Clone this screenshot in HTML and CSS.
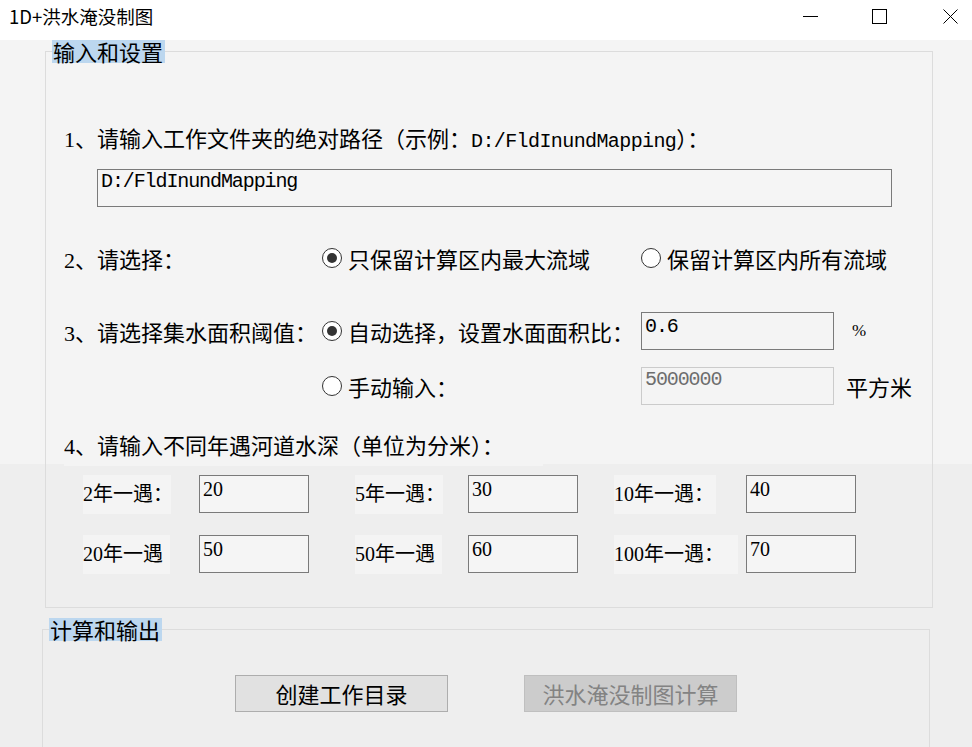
FILE: index.html
```html
<!DOCTYPE html>
<html lang="zh-CN">
<head>
<meta charset="utf-8">
<title>1D+洪水淹没制图</title>
<link rel="stylesheet" href="styles.css">
</head>
<body>
<div class="window">
  <header class="titlebar">
    <div class="title">1D+洪水淹没制图</div>
    <div class="caption-buttons">
      <span class="cap cap-min"><svg width="15" height="15" viewBox="0 0 15 15"><path d="M0 7.5H15" stroke="#000" stroke-width="1" fill="none"/></svg></span>
      <span class="cap cap-max"><svg width="15" height="15" viewBox="0 0 15 15"><rect x="0.5" y="0.5" width="14" height="14" stroke="#000" stroke-width="1" fill="none"/></svg></span>
      <span class="cap cap-close"><svg width="15" height="15" viewBox="0 0 15 15"><path d="M0.5 0.5L14.5 14.5M14.5 0.5L0.5 14.5" stroke="#000" stroke-width="1" fill="none"/></svg></span>
    </div>
  </header>
  <main class="client">
    <fieldset class="group group-settings">
      <legend class="group-title">输入和设置</legend>
      <div class="line-label">1、请输入工作文件夹的绝对路径（示例：<span class="mono">D:/FldInundMapping</span>）：</div>
      <div class="textbox path">D:/FldInundMapping</div>

      <div class="row row-choice">
        <div class="row-label">2、请选择：</div>
        <label class="option"><span class="radio checked"></span>只保留计算区内最大流域</label>
        <label class="option"><span class="radio"></span>保留计算区内所有流域</label>
      </div>

      <div class="row row-area">
        <div class="row-label">3、请选择集水面积阈值：</div>
        <label class="option"><span class="radio checked"></span>自动选择，设置水面面积比：</label>
        <div class="textbox small ratio">0.6</div>
        <span class="unit pct">%</span>
      </div>

      <div class="row row-manual">
        <div class="row-label"></div>
        <label class="option"><span class="radio"></span>手动输入：</label>
        <div class="textbox small disabled">5000000</div>
        <span class="unit sqm">平方米</span>
      </div>

      <div class="depth-title">4、请输入不同年遇河道水深（单位为分米）：</div>

      <div class="depth-grid">
        <div class="depth-label w88">2年一遇：</div><div class="textbox depth">20</div>
        <div class="depth-label w88">5年一遇：</div><div class="textbox depth">30</div>
        <div class="depth-label w102">10年一遇：</div><div class="textbox depth">40</div>
        <div class="depth-label w87">20年一遇</div><div class="textbox depth">50</div>
        <div class="depth-label w87">50年一遇</div><div class="textbox depth">60</div>
        <div class="depth-label w124">100年一遇：</div><div class="textbox depth">70</div>
      </div>
    </fieldset>

    <fieldset class="group group-output">
      <legend class="group-title">计算和输出</legend>
      <div class="actions">
        <button class="btn" type="button">创建工作目录</button>
        <button class="btn" type="button" disabled>洪水淹没制图计算</button>
      </div>
    </fieldset>
  </main>
</div>
</body>
</html>
```
FILE: styles.css
```css
* { box-sizing: border-box; }
html, body { margin: 0; padding: 0; }
body {
  width: 972px;
  height: 747px;
  overflow: hidden;
  background: #eeeeee;
  color: #000;
  font-family: "Liberation Serif", "Noto Sans CJK SC", sans-serif;
}
.window {
  height: 747px;
  display: flex;
  flex-direction: column;
  overflow: hidden;
}

/* title bar */
.titlebar {
  height: 40px;
  flex: none;
  background: #ffffff;
  display: flex;
  justify-content: space-between;
  align-items: flex-start;
}
.title {
  font-family: "Noto Sans CJK SC", sans-serif;
  font-size: 18.5px;
  line-height: 33px;
  height: 33px;
  padding-left: 9px;
}
.caption-buttons {
  display: flex;
  padding: 9px 14px 0 0;
}
.cap { display: block; width: 15px; height: 15px; }
.cap svg { display: block; }
.cap-max { margin-left: 54px; }
.cap-close { margin-left: 56px; }

/* client area */
.client {
  flex: 1;
  background: linear-gradient(#f4f4f4 424px, #eeeeee 424px);
}

.group {
  margin: 0;
  padding: 0;
  border: 1px solid #dcdcdc;
  min-width: 0;
  width: 888px;
}
.group-settings {
  margin-left: 45px;
  padding-bottom: 33px;
}
.group-output {
  margin-top: 10px;
  margin-left: 42px;
  padding-bottom: 80px;
}
.group-title {
  margin-left: 6px;
  padding: 0 2px 0 1px;
  height: 23px;
  font-family: "Noto Sans CJK SC", sans-serif;
  font-size: 22px;
  line-height: 23px;
  background: #bcd7ef;
}

.line-label {
  margin-top: 62px;
  padding-left: 18px;
  height: 30px;
  font-size: 22px;
  line-height: 30px;
  white-space: nowrap;
}
.mono {
  font-family: "Liberation Mono", monospace;
  font-size: 20px;
  line-height: 1;
  letter-spacing: -0.6px;
}

.textbox {
  height: 38px;
  border: 1px solid #7a7a7a;
  background: #f5f5f5;
  padding: 0 3px;
  white-space: nowrap;
  overflow: hidden;
}
.textbox.path {
  width: 795px;
  margin-left: 51px;
  margin-top: 14px;
  font-family: "Liberation Mono", monospace;
  font-size: 20px;
  letter-spacing: -1.1px;
  line-height: 23px;
}
.textbox.small {
  width: 193px;
  flex: none;
  font-family: "Liberation Mono", monospace;
  font-size: 20px;
  letter-spacing: -1.1px;
  line-height: 23px;
  background: #f4f4f4;
}
.textbox.ratio { padding-top: 2px; }
.textbox.disabled {
  border-color: #cbcbcb;
  color: #6d6d6d;
}

.row {
  display: flex;
  align-items: center;
  padding-left: 18px;
  font-size: 22px;
  white-space: nowrap;
}
.row-choice { margin-top: 36px; height: 30px; }
.row-area { margin-top: 39px; height: 38px; }
.row-manual { margin-top: 17px; height: 38px; }
.row-label { width: 258px; flex: none; }
.option {
  width: 319px;
  flex: none;
  display: flex;
  align-items: center;
  font-family: "Noto Sans CJK SC", sans-serif;
}
.radio {
  width: 20px;
  height: 20px;
  flex: none;
  margin-right: 6px;
  border: 1.3px solid #333;
  border-radius: 50%;
  background: #fff;
  display: flex;
  align-items: center;
  justify-content: center;
}
.radio.checked::after {
  content: "";
  width: 10px;
  height: 10px;
  border-radius: 50%;
  background: #333;
}
.unit.pct {
  margin-left: 18px;
  font-size: 17px;
}
.unit.sqm {
  margin-left: 12px;
  font-family: "Noto Sans CJK SC", sans-serif;
}

.depth-title {
  margin-top: 23px;
  margin-left: 18px;
  width: 479px;
  height: 38px;
  line-height: 38px;
  font-size: 22px;
  background: #f4f4f4;
  white-space: nowrap;
}

.depth-grid {
  margin-top: 9px;
  margin-left: 37px;
  display: grid;
  grid-template-columns: 116px 156px 113px 146px 132px 110px;
  grid-auto-rows: 39px;
  row-gap: 21px;
}
.depth-label {
  height: 39px;
  line-height: 39px;
  font-size: 20px;
  background: #f4f4f4;
  white-space: nowrap;
}
.w87 { width: 87px; }
.w88 { width: 88px; }
.w102 { width: 102px; }
.w124 { width: 124px; }
.textbox.depth {
  width: 110px;
  font-size: 20px;
  line-height: 24px;
  padding: 1px 3px 0;
}

.actions {
  display: flex;
  gap: 76px;
  padding-top: 34px;
  padding-left: 192px;
}
.btn {
  width: 213px;
  height: 37px;
  padding: 0;
  border: 1px solid #adadad;
  background: #e1e1e1;
  color: #000;
  font-family: "Noto Sans CJK SC", sans-serif;
  font-size: 22px;
  line-height: 35px;
}
.btn:disabled {
  background: #cccccc;
  border-color: #bfbfbf;
  color: #838383;
}
```
